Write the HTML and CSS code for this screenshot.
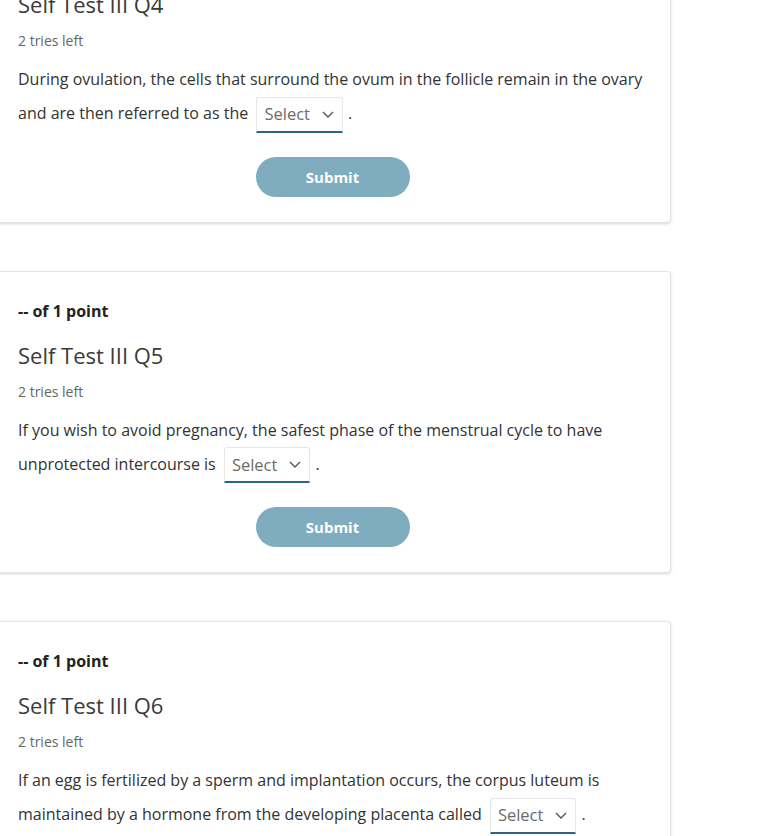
FILE: index.html
```html
<!DOCTYPE html>
<html lang="en">
<head>
    <meta charset="UTF-8">
    <meta name="viewport" content="width=device-width, initial-scale=1.0">
    <title>Self Test III</title>
    <link rel="stylesheet" href="styles.css">
</head>
<body>
    <div class="question-list">
        <div class="question-card">
            <div class="points">-- of 1 point</div>
            <h2 class="question-title">Self Test III Q4</h2>
            <div class="tries">2 tries left</div>
            <p class="question-text">
                During ovulation, the cells that surround the ovum in the follicle remain in the ovary
                and are then referred to as the
                <span class="dropdown">Select <svg class="chevron" viewBox="0 0 12 7"><path d="M1 1l5 5 5-5"/></svg></span>.
            </p>
            <div class="actions">
                <button class="submit-btn">Submit</button>
            </div>
        </div>

        <div class="question-card">
            <div class="points">-- of 1 point</div>
            <h2 class="question-title">Self Test III Q5</h2>
            <div class="tries">2 tries left</div>
            <p class="question-text">
                If you wish to avoid pregnancy, the safest phase of the menstrual cycle to have
                unprotected intercourse is
                <span class="dropdown">Select <svg class="chevron" viewBox="0 0 12 7"><path d="M1 1l5 5 5-5"/></svg></span>.
            </p>
            <div class="actions">
                <button class="submit-btn">Submit</button>
            </div>
        </div>

        <div class="question-card">
            <div class="points">-- of 1 point</div>
            <h2 class="question-title">Self Test III Q6</h2>
            <div class="tries">2 tries left</div>
            <p class="question-text">
                If an egg is fertilized by a sperm and implantation occurs, the corpus luteum is
                maintained by a hormone from the developing placenta called
                <span class="dropdown">Select <svg class="chevron" viewBox="0 0 12 7"><path d="M1 1l5 5 5-5"/></svg></span>.
            </p>
            <div class="actions">
                <button class="submit-btn">Submit</button>
            </div>
        </div>
    </div>
</body>
</html>
```

FILE: styles.css
```css
html {
    overflow: hidden;
}
body {
    font-family: 'Open Sans', 'Noto Sans', Arial, sans-serif;
    color: #333;
    background-color: #fff;
    margin: 0;
}
.question-list {
    width: 677px;
    margin: -80px 0 0 -6px;
    display: flex;
    flex-direction: column;
    gap: 48px;
}
.question-card {
    background-color: #fff;
    border: 1px solid #e4e4e4;
    border-radius: 4px;
    box-shadow: 0 1px 3px rgba(0, 0, 0, 0.16);
    padding: 27px 23px 25px;
}
.points {
    font-size: 16px;
    font-weight: bold;
    line-height: 24px;
    color: #222;
}
.question-title {
    font-size: 22px;
    font-weight: normal;
    line-height: 30px;
    color: #3a3a3a;
    margin: 17px 0 0;
}
.tries {
    font-size: 14px;
    line-height: 20px;
    color: #666;
    margin-top: 12px;
}
.question-text {
    font-size: 16px;
    line-height: 34px;
    color: #333;
    margin: 11px 0 0;
}
.dropdown {
    display: inline-flex;
    align-items: center;
    gap: 12px;
    height: 36px;
    padding: 0 8px 0 7px;
    margin: 0 5px 0 4px;
    border: 1px solid #e6e6e6;
    border-bottom: 2px solid #2b6781;
    border-radius: 3px 3px 0 0;
    color: #6b6b6b;
    font-size: 16.5px;
    vertical-align: middle;
    box-sizing: border-box;
    line-height: 1;
}
.chevron {
    width: 12px;
    height: 7px;
    fill: none;
    stroke: #555;
    stroke-width: 1.4;
}
.actions {
    display: flex;
    justify-content: center;
    margin-top: 24px;
}
.submit-btn {
    background-color: #7fadbf;
    color: white;
    border: none;
    width: 154px;
    height: 40px;
    border-radius: 20px;
    font-family: inherit;
    font-size: 15px;
    font-weight: bold;
    cursor: pointer;
}
```
